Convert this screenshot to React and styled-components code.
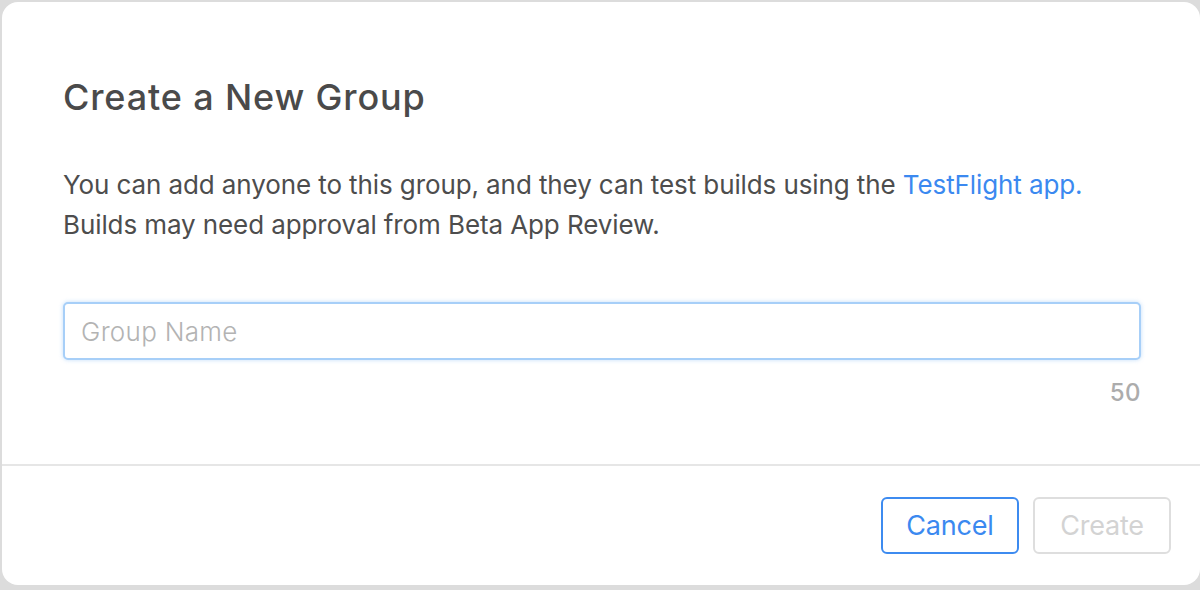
import React from "react";
import styled, { createGlobalStyle } from "styled-components";

const Global = createGlobalStyle`
  html, body { margin: 0; padding: 0; }
  body {
    background: #dcdcdc;
    font-family: Inter, "Noto Sans", "Liberation Sans", sans-serif;
    -webkit-font-smoothing: antialiased;
  }
  #root { width: 1200px; height: 590px; overflow: hidden; }
`;

const Page = styled.div`
  width: 1200px;
  height: 590px;
  box-sizing: border-box;
  padding: 2px 0 0 2px;
`;

const Modal = styled.div`
  width: 1198px;
  height: 583px;
  background: #fff;
  border-radius: 16px;
  display: flex;
  flex-direction: column;
  overflow: hidden;
`;

const Content = styled.div`
  flex: 1;
  padding: 73px 59px 0 61px;
  display: flex;
  flex-direction: column;
`;

const Title = styled.h1`
  margin: 0;
  font-size: 36px;
  line-height: 44px;
  font-weight: 500;
  color: #4a4a4a;
  letter-spacing: 0.85px;
`;

const Text = styled.p`
  margin: 46px 0 0;
  font-size: 26px;
  line-height: 40px;
  font-weight: 400;
  color: #4d4d4d;
  letter-spacing: -0.1px;
`;

const Link = styled.a`
  color: #3b89f0;
  text-decoration: none;
`;

const Input = styled.input`
  margin-top: 57px;
  box-sizing: border-box;
  width: 100%;
  height: 58px;
  border: 2px solid #a7cff8;
  border-radius: 5px;
  box-shadow: 0 0 4px rgba(120, 180, 245, 0.45);
  padding: 0 16px;
  font-family: inherit;
  font-size: 26px;
  font-weight: 300;
  color: #4a4a4a;
  outline: none;
  letter-spacing: 0.3px;
  &::placeholder { color: #b3b3b3; }
`;

const Counter = styled.div`
  margin-top: 18px;
  text-align: right;
  font-size: 24px;
  line-height: 30px;
  font-weight: 500;
  color: #acacac;
  letter-spacing: 0.5px;
`;

const Footer = styled.div`
  border-top: 2px solid #e6e6e6;
  height: 121px;
  flex-shrink: 0;
  box-sizing: border-box;
  display: flex;
  justify-content: flex-end;
  align-items: flex-start;
  gap: 14px;
  padding: 31px 29px 0 0;
`;

const Button = styled.button`
  box-sizing: border-box;
  width: 138px;
  height: 57px;
  border-radius: 6px;
  background: #fff;
  border: 2px solid ${(p) => (p.$primary ? "#3d8bf0" : "#dedede")};
  color: ${(p) => (p.$primary ? "#3b89f0" : "#d3d3d3")};
  font-family: inherit;
  font-size: 27px;
  font-weight: 400;
  letter-spacing: -0.2px;
  padding: 0;
  cursor: ${(p) => (p.$primary ? "pointer" : "default")};
`;

export default function App() {
  return (
    <Page>
      <Global />
      <Modal>
        <Content>
          <Title>Create a New Group</Title>
          <Text>
            You can add anyone to this group, and they can test builds using the{" "}
            <Link href="#">TestFlight app.</Link>
            <br />
            Builds may need approval from Beta App Review.
          </Text>
          <Input placeholder="Group Name" />
          <Counter>50</Counter>
        </Content>
        <Footer>
          <Button $primary>Cancel</Button>
          <Button disabled>Create</Button>
        </Footer>
      </Modal>
    </Page>
  );
}
